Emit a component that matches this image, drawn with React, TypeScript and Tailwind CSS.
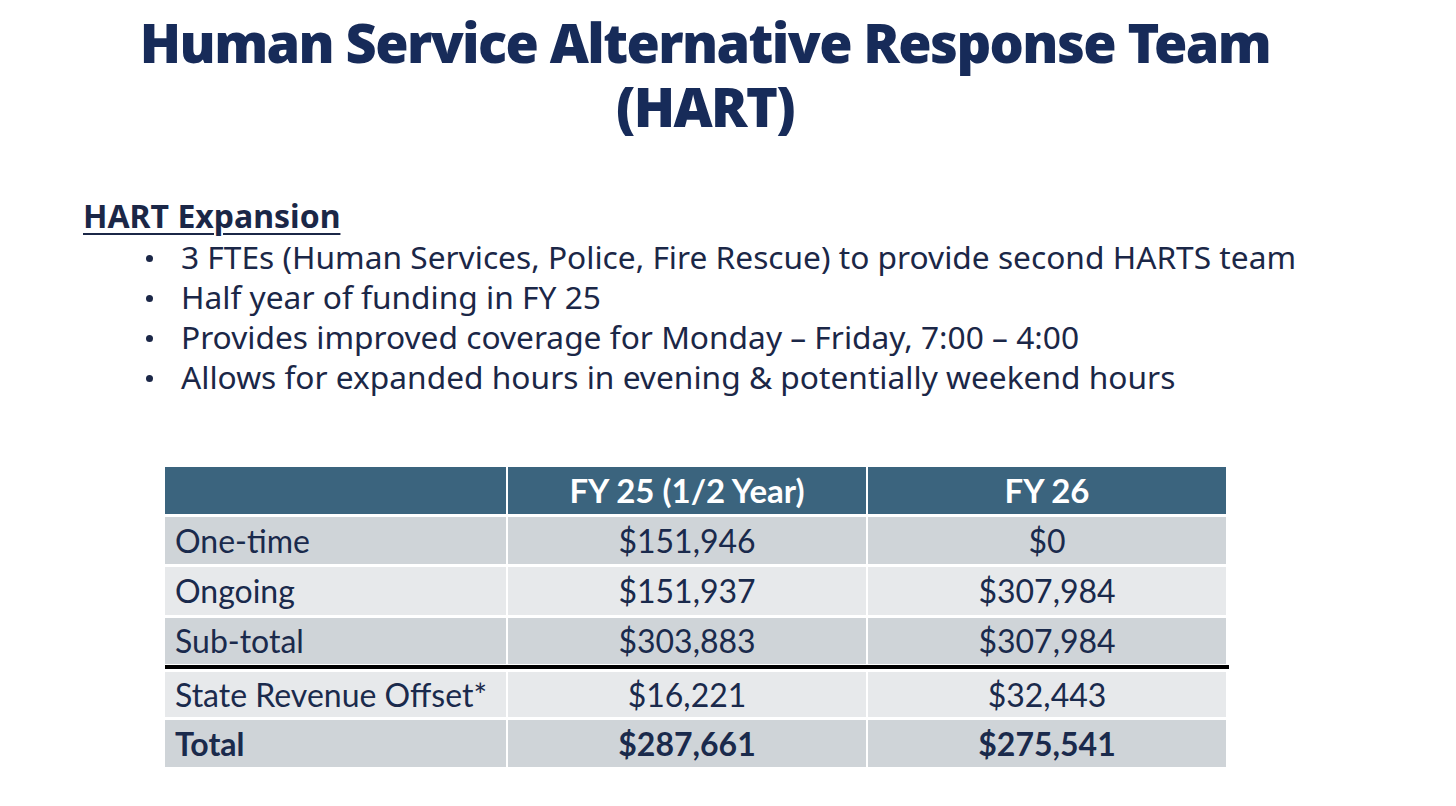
import React from "react";

const rows = [
  { label: "One-time", a: "$151,946", b: "$0", bg: "bg-[#cfd4d8]", h: "h-[47px]", bold: false },
  { label: "Ongoing", a: "$151,937", b: "$307,984", bg: "bg-[#e7e9eb]", h: "h-[48px]", bold: false },
  { label: "Sub-total", a: "$303,883", b: "$307,984", bg: "bg-[#cfd4d8]", h: "h-[46px]", bold: false },
];
const rows2 = [
  { label: "State Revenue Offset*", a: "$16,221", b: "$32,443", bg: "bg-[#e7e9eb]", h: "h-[45px]", bold: false },
  { label: "Total", a: "$287,661", b: "$275,541", bg: "bg-[#cfd4d8]", h: "h-[47px]", bold: true },
];

type Row = { label: string; a: string; b: string; bg: string; h: string; bold: boolean };

function TRow({ r }: { r: Row }) {
  const w = r.bold ? "font-bold" : "font-normal";
  return (
    <div className={`flex gap-[2px] ${r.h}`}>
      <div className={`w-[341px] ${r.bg} flex items-center pl-[10px] ${w}`}>{r.label}</div>
      <div className={`w-[358px] ${r.bg} flex items-center justify-center ${w}`}>{r.a}</div>
      <div className={`w-[358px] ${r.bg} flex items-center justify-center ${w}`}>{r.b}</div>
    </div>
  );
}

export default function App() {
  return (
    <div className="w-[1456px] h-[806px] bg-white overflow-hidden relative">
      <div
        className="text-center text-[#172b59] text-[54px] leading-[64px] pt-[10px] pr-[46px] font-black tracking-[-1.6px]"
        style={{ fontFamily: '"Noto Sans", "Open Sans", sans-serif' }}
      >
        <div>Human Service Alternative Response Team</div>
        <div>(HART)</div>
      </div>

      <div
        className="pl-[83px] mt-[58px] text-[#1b2747]"
        style={{ fontFamily: '"Noto Sans", "Open Sans", sans-serif' }}
      >
        <div className="text-[32px] leading-[40px] font-bold underline underline-offset-[5px] decoration-[2px]">
          HART Expansion
        </div>
        <ul className="text-[31.7px] leading-[40px] pl-[62px] mt-[1px]">
          {[
            "3 FTEs (Human Services, Police, Fire Rescue) to provide second HARTS team",
            "Half year of funding in FY 25",
            "Provides improved coverage for Monday – Friday, 7:00 – 4:00",
            "Allows for expanded hours in evening & potentially weekend hours",
          ].map((t) => (
            <li key={t} className="flex h-[40px] items-center">
              <span className="w-[36px] shrink-0 flex items-center">
                <span className="block w-[7px] h-[7px] rounded-full bg-[#1b2747] ml-[1px] mt-[2px]" />
              </span>
              <span>{t}</span>
            </li>
          ))}
        </ul>
      </div>

      <div
        className="ml-[165px] mt-[70px] w-[1064px] flex flex-col gap-[3px] text-[32px] text-[#1a2a4c]"
        style={{ fontFamily: 'Lato, "Open Sans", sans-serif' }}
      >
        <div className="flex gap-[2px] h-[47px] text-white font-bold text-[33px]">
          <div className="w-[341px] bg-[#3b647e]" />
          <div className="w-[358px] bg-[#3b647e] flex items-center justify-center">FY 25 (1/2 Year)</div>
          <div className="w-[358px] bg-[#3b647e] flex items-center justify-center">FY 26</div>
        </div>
        {rows.map((r) => (
          <TRow key={r.label} r={r} />
        ))}
        <div className="h-[4px] w-[1064px] bg-black -mt-[2px] mb-0" />
        {rows2.map((r) => (
          <TRow key={r.label} r={r} />
        ))}
      </div>
    </div>
  );
}
